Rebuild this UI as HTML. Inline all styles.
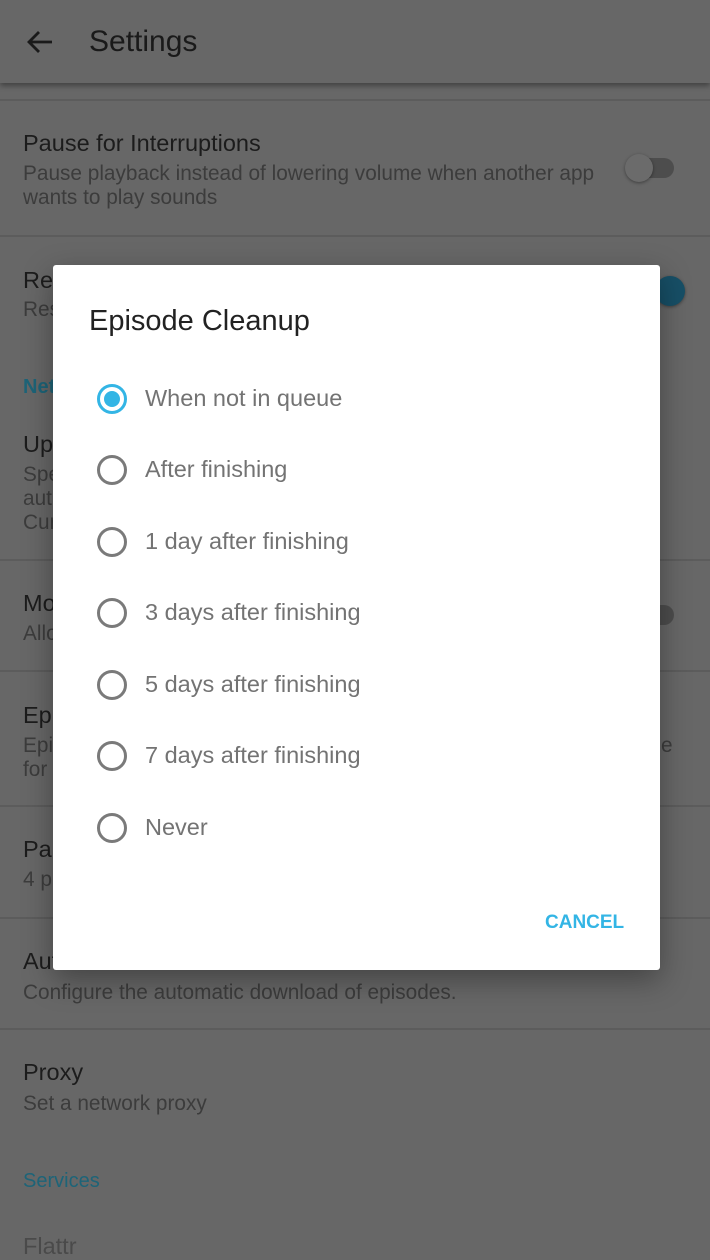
<!DOCTYPE html>
<html><head><meta charset="utf-8"><style>
*{margin:0;padding:0;box-sizing:border-box}
body{width:710px;height:1235px;overflow:hidden;background:#676767;font-family:"Liberation Sans",sans-serif;position:relative}
.a{position:absolute;white-space:nowrap}
.t{font-size:23.5px;color:#1c1c1c;left:23px}
.s{font-size:20.8px;color:#3c3c3c;left:23px}
.h{font-size:20px;color:#1d6478;left:23px;font-weight:bold}
.d{position:absolute;left:0;width:710px;height:2px;background:#5c5c5c}
.r{position:absolute;left:97px;width:30px;height:30px;border:3px solid #7a7a7a;border-radius:50%}
.l{position:absolute;left:145px;font-size:23.5px;color:#737373;white-space:nowrap}
</style></head><body>
<div class="a" style="left:0;top:0;width:710px;height:83px;background:#676767;box-shadow:0 3px 5px rgba(0,0,0,.35)"></div>
<svg class="a" style="left:26px;top:29px" width="28" height="26" viewBox="0 0 28 26"><path d="M26 13H4M13 3L3 13l10 10" stroke="#1a1a1a" stroke-width="2.8" fill="none"/></svg>
<div class="a" style="left:89px;top:25px;font-size:30px;color:#1a1a1a">Settings</div>
<div class="d" style="top:99px"></div>
<div class="a t" style="top:130px">Pause for Interruptions</div>
<div class="a s" style="top:162px;line-height:24px">Pause playback instead of lowering volume when another app<br>wants to play sounds</div>
<div class="a" style="left:630px;top:158px;width:44px;height:20px;border-radius:10px;background:#4d4d4d"></div>
<div class="a" style="left:625px;top:154px;width:28px;height:28px;border-radius:50%;background:#6b6b6b;box-shadow:0 1px 3px rgba(0,0,0,.4)"></div>
<div class="d" style="top:235px"></div>
<div class="a t" style="top:267px">Resume</div>
<div class="a s" style="top:298px">Resume</div>
<div class="a" style="left:655px;top:276px;width:30px;height:30px;border-radius:50%;background:#174f66;box-shadow:0 1px 3px rgba(0,0,0,.4)"></div>
<div class="a h" style="top:376px">Network</div>
<div class="a t" style="top:431px">Update</div>
<div class="a s" style="top:463px;line-height:24px">Spe<br>aut<br>Cur</div>
<div class="d" style="top:559px"></div>
<div class="a t" style="top:590px">Mobile</div>
<div class="a s" style="top:622px">Allow</div>
<div class="a" style="left:640px;top:605px;width:34px;height:20px;border-radius:10px;background:#4d4d4d"></div>
<div class="d" style="top:670px"></div>
<div class="a t" style="top:702px">Episode</div>
<div class="a s" style="top:734px;line-height:24px">Epi<br>for</div>
<div class="a s" style="top:734px;left:661px">e</div>
<div class="d" style="top:805px"></div>
<div class="a t" style="top:836px">Parallel</div>
<div class="a s" style="top:868px">4 p</div>
<div class="d" style="top:917px"></div>
<div class="a t" style="top:948px">Automatic</div>
<div class="a s" style="top:981px">Configure the automatic download of episodes.</div>
<div class="d" style="top:1028px"></div>
<div class="a t" style="top:1059px">Proxy</div>
<div class="a s" style="top:1092px">Set a network proxy</div>
<div class="a h" style="top:1170px;font-weight:normal">Services</div>
<div class="a t" style="top:1233px;color:#4a4a4a">Flattr</div>

<div class="a" style="left:53px;top:265px;width:607px;height:705px;background:#fff;border-radius:3px;box-shadow:0 10px 30px rgba(0,0,0,.35)"></div>
<div class="a" style="left:89px;top:305px;font-size:29px;color:#222">Episode Cleanup</div>
<div class="r" style="top:384px;border-color:#33b5e5"></div>
<div class="a" style="left:104px;top:391px;width:16px;height:16px;border-radius:50%;background:#33b5e5"></div>
<div class="l" style="top:385px">When not in queue</div>
<div class="r" style="top:455px"></div><div class="l" style="top:456px">After finishing</div>
<div class="r" style="top:527px"></div><div class="l" style="top:528px">1 day after finishing</div>
<div class="r" style="top:598px"></div><div class="l" style="top:599px">3 days after finishing</div>
<div class="r" style="top:670px"></div><div class="l" style="top:671px">5 days after finishing</div>
<div class="r" style="top:741px"></div><div class="l" style="top:742px">7 days after finishing</div>
<div class="r" style="top:813px"></div><div class="l" style="top:814px">Never</div>
<div class="a" style="left:545px;top:912px;font-size:19px;color:#33b5e5;font-weight:bold;letter-spacing:0">CANCEL</div>
</body></html>
